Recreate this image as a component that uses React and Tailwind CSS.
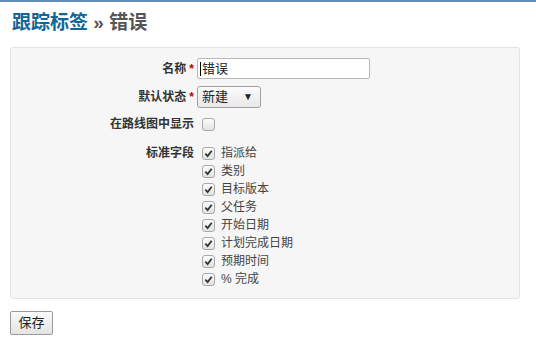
const fields = ['指派给', '类别', '目标版本', '父任务', '开始日期', '计划完成日期', '预期时间', '% 完成'];

function Check({ checked }) {
  return (
    <span className="flex h-[13px] w-[13px] items-center justify-center rounded-[3px] border border-[#a9a9a9] bg-gradient-to-b from-[#fcfcfc] to-[#e2e2e2]">
      {checked && (
        <svg width="9" height="9" viewBox="0 0 10 10">
          <path d="M1.5 5.2 L4 7.8 L8.6 2" fill="none" stroke="#333" strokeWidth="2" />
        </svg>
      )}
    </span>
  );
}

function Row({ label, required, children, className = '' }) {
  return (
    <div className={`flex ${className}`}>
      <div className="w-[183px] shrink-0 text-right font-bold text-[#333]">
        {label}
        {required && <span className="ml-[3px] text-[#bb0000]">*</span>}
      </div>
      <div className="ml-[3px] flex-1">{children}</div>
    </div>
  );
}

export default function App() {
  return (
    <div className="min-h-[341px] w-[536px] bg-white text-[12px] leading-[18px] text-[#333] [font-family:'Liberation_Sans','Noto_Sans_CJK_SC',sans-serif]">
      <div className="h-[2px] bg-[#628db6]" />
      <h2 className="px-[12px] pt-[9px] text-[19px] font-bold leading-[24px] text-[#555]">
        <span className="text-[#169]">跟踪标签</span> » 错误
      </h2>
      <div className="mx-[10px] mt-[12px] w-[510px] rounded-[3px] border border-[#e4e4e4] bg-[#f6f6f6] pb-[10px] pt-[10px]">
        <Row label="名称" required className="items-center">
          <div className="flex h-[21px] w-[173px] items-center rounded-[2px] border border-[#b8b8b8] bg-white px-[2px] text-[13px] text-[#222]">
            <span className="mr-[1px] h-[14px] w-px bg-black" />
            错误
          </div>
        </Row>
        <Row label="默认状态" required className="mt-[7px] items-center">
          <div className="flex h-[22px] w-[64px] items-center justify-between rounded-[3px] border border-[#a0a0a0] bg-gradient-to-b from-[#fbfbfb] to-[#e8e8e8] pl-[4px] pr-[7px] text-[13px] text-[#222]">
            <span>新建</span>
            <span className="text-[10px]">▼</span>
          </div>
        </Row>
        <Row label="在路线图中显示" className="mt-[7px] items-center">
          <div className="pl-[5px]">
            <Check />
          </div>
        </Row>
        <Row label="标准字段" className="mt-[11px]">
          <div className="flex flex-col pl-[5px] text-[#444]">
            {fields.map((f) => (
              <div key={f} className="flex h-[18px] items-center gap-[6px]">
                <Check checked />
                <span>{f}</span>
              </div>
            ))}
          </div>
        </Row>
      </div>
      <button className="ml-[10px] mt-[12px] h-[24px] w-[43px] rounded-[2px] border border-[#9a9a9a] bg-gradient-to-b from-[#fafafa] to-[#e4e4e4] text-[13px] text-[#222]">
        保存
      </button>
    </div>
  );
}
